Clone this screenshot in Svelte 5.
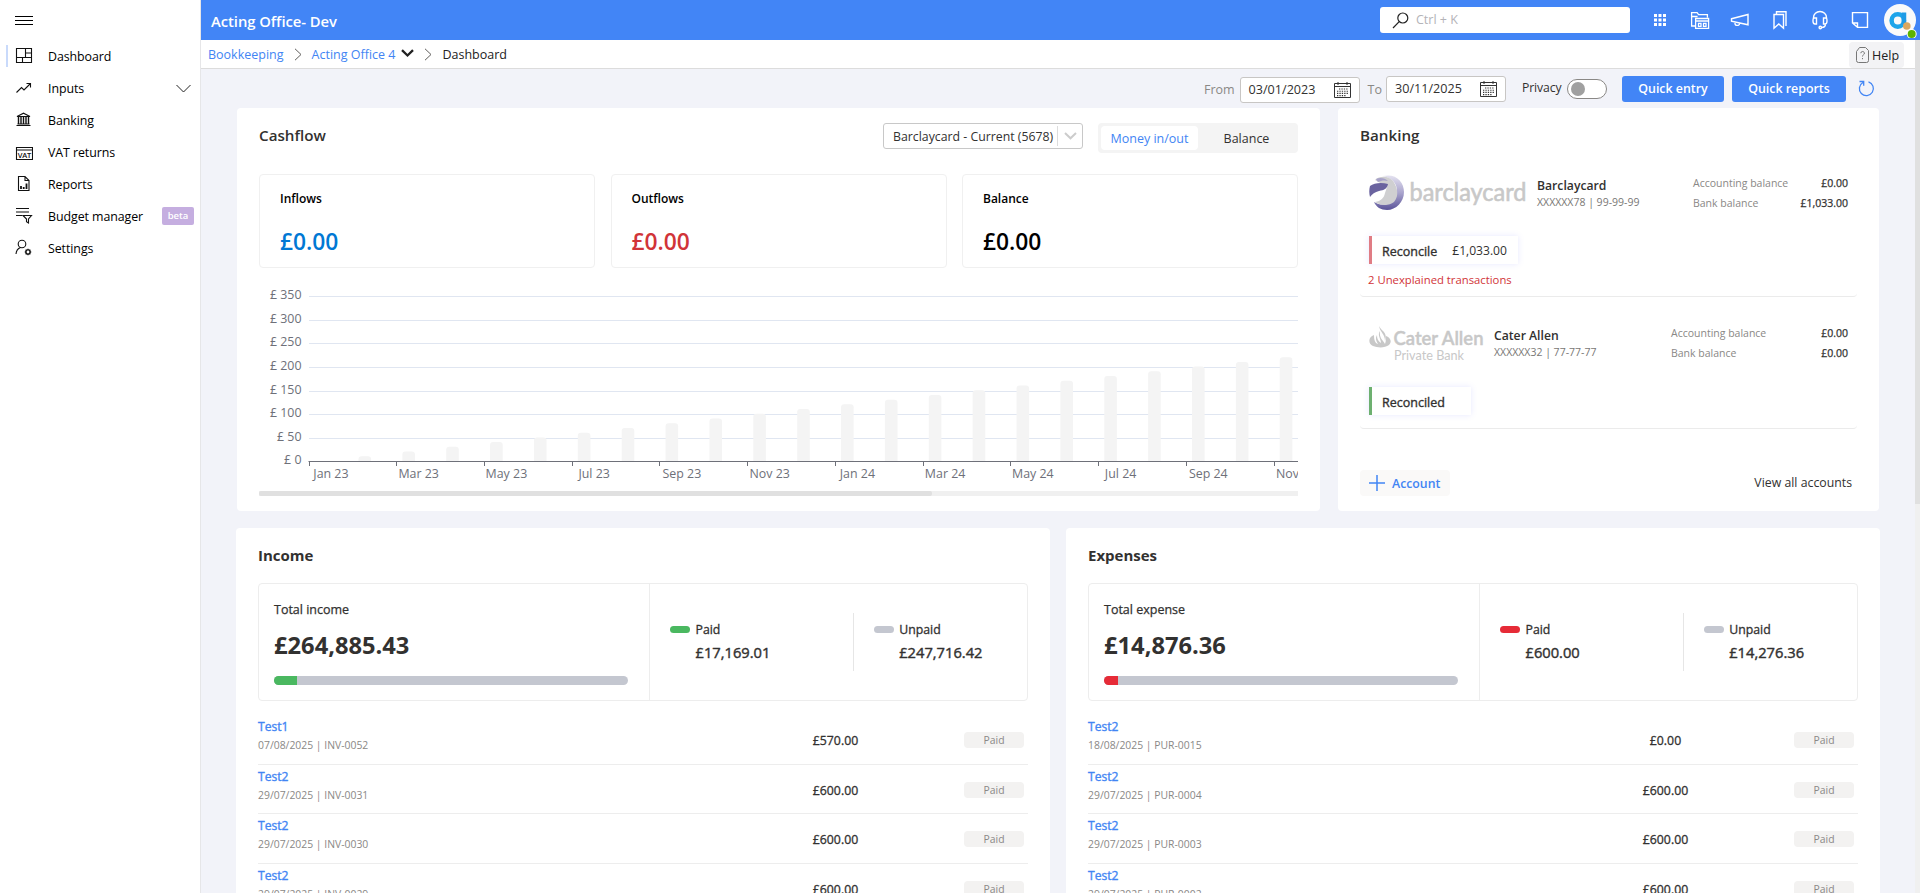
<script>
  const nav = [
    { label: 'Dashboard', icon: 'dashboard', active: true },
    { label: 'Inputs', icon: 'trend', expand: true },
    { label: 'Banking', icon: 'bank' },
    { label: 'VAT returns', icon: 'vat' },
    { label: 'Reports', icon: 'report' },
    { label: 'Budget manager', icon: 'budget', badge: 'beta' },
    { label: 'Settings', icon: 'settings' }
  ];

  const flows = [
    { label: 'Inflows', color: '#0078d4' },
    { label: 'Outflows', color: '#d13438' },
    { label: 'Balance', color: '#000' }
  ];

  const step = 43.87;
  const yTicks = [350, 300, 250, 200, 150, 100, 50, 0];
  const yOf = (v) => Math.round(181.3 - (v * 165.2) / 350) + 0.5;
  const xLabels = ['Jan 23', 'Mar 23', 'May 23', 'Jul 23', 'Sep 23', 'Nov 23', 'Jan 24', 'Mar 24', 'May 24', 'Jul 24', 'Sep 24', 'Nov 24'];
  const bars = Array.from({ length: 22 }, (_, i) => i + 1);

  const panels = [
    {
      title: 'Income', label: 'Total income', total: '£264,885.43', color: '#4ab860', pct: 6.5,
      paid: '£17,169.01', unpaid: '£247,716.42',
      rows: [
        ['Test1', '07/08/2025 | INV-0052', '£570.00'],
        ['Test2', '29/07/2025 | INV-0031', '£600.00'],
        ['Test2', '29/07/2025 | INV-0030', '£600.00'],
        ['Test2', '29/07/2025 | INV-0029', '£600.00']
      ]
    },
    {
      title: 'Expenses', label: 'Total expense', total: '£14,876.36', color: '#e62b37', pct: 4,
      paid: '£600.00', unpaid: '£14,276.36',
      rows: [
        ['Test2', '18/08/2025 | PUR-0015', '£0.00'],
        ['Test2', '29/07/2025 | PUR-0004', '£600.00'],
        ['Test2', '29/07/2025 | PUR-0003', '£600.00'],
        ['Test2', '29/07/2025 | PUR-0002', '£600.00']
      ]
    }
  ];
</script>

{#snippet calendar()}
  <svg class="cal" width="17" height="16" viewBox="0 0 17 16" fill="none" stroke="#333">
    <path d="M.5 1.500h16v14H.5zM.5 4.500h16M4 0v3M13 0v3" />
    <path d="M5 7h9.500M3 9.200h11.500M3 11.400h11.500M3 13.600h9" stroke-dasharray="1.300 1.100" stroke-width="1.100" />
  </svg>
{/snippet}

{#snippet crumbSep()}
  <svg class="sep" width="8" height="13" viewBox="0 0 8 13" fill="none" stroke="#605e5c"><path d="M1 .8l6 5.700-6 5.700" /></svg>
{/snippet}

<div class="app">
  <aside>
    <div class="burger"><i></i><i></i><i></i></div>
    <nav>
      {#each nav as n}
        <div class="item" class:active={n.active}>
          <svg class="ico" width="18" height="18" viewBox="0 0 18 18" fill="none" stroke="#111" stroke-width="1.100">
            {#if n.icon === 'dashboard'}
              <path d="M1.500 1.500h15v14h-15zM10.500 1.500v9M1.500 10.500h15M7.500 10.500v5M10.500 6h6" />
            {:else if n.icon === 'trend'}
              <path d="M1.500 13.500l5-5 2.500 2.500 6.500-6.500M11.500 4.500h4v4" />
            {:else if n.icon === 'bank'}
              <path d="M2 5.500h13L8.500 2.200zM1.500 14.500h14M2.500 13h12" />
              <path d="M3.500 6v7M6 6v7M8.500 6v7M11 6v7M13.500 6v7" stroke-width="1.400" />
            {:else if n.icon === 'vat'}
              <path d="M1.500 4.500h16v12h-16zM1.500 7h16" />
              <text x="9.500" y="14.800" font-size="7.500" font-weight="600" text-anchor="middle" fill="#111" stroke="none" textLength="13.500">VAT</text>
            {:else if n.icon === 'report'}
              <path d="M3.500 1.500h6.500l4 4v10h-10.500zM10 1.500v4h4" />
              <path d="M6 14v-3M8.700 14v-2M11.500 14V8.500" stroke-width="1.800" />
            {:else if n.icon === 'budget'}
              <path d="M1 1.500h13M1 5h13M1 8.500h6M8 8.500h8.500L13.500 12v4l-2-1.200V12z" />
            {:else}
              <circle cx="7" cy="5" r="3.800" />
              <path d="M1 15c.3-3.500 2-5.600 4.500-6.500" />
              <circle cx="13" cy="13" r="2.100" stroke-width="1.400" />
              <path d="M13 9.700v1.300M13 15v1.300M9.700 13h1.300M15 13h1.300M10.700 10.700l.9.900M14.400 14.400l.9.900M15.300 10.700l-.9.900M11.600 14.400l-.9.900" />
            {/if}
          </svg>
          <span class="nl">{n.label}</span>
          {#if n.expand}
            <svg class="exp" width="15" height="9" viewBox="0 0 15 9" fill="none" stroke="#222"><path d="M.5 1l7 7 7-7" /></svg>
          {/if}
          {#if n.badge}<span class="beta">{n.badge}</span>{/if}
        </div>
      {/each}
    </nav>
  </aside>

  <div class="main">
    <header>
      <h1>Acting Office- Dev</h1>
      <div class="search">
        <svg width="17" height="17" viewBox="0 0 17 17" fill="none" stroke="#222" stroke-width="1.200"><circle cx="10.800" cy="6" r="5" /><path d="M7.200 9.600L1 16" /></svg>
        <span>Ctrl + K</span>
      </div>
      <div class="tools">
        <svg width="20" height="20" viewBox="0 0 20 20" fill="#fff">
          {#each [4, 8.5, 13] as y}{#each [4, 8.5, 13] as x}<rect {x} {y} width="3" height="3" />{/each}{/each}
        </svg>
        <svg width="20" height="20" viewBox="0 0 20 20" fill="none" stroke="#fff" stroke-width="1.300">
          <path d="M6 16H1.600V2.600h5.500l1.500 2h8.800v3M1.600 6.500h6M5.600 8.500h13v9.900h-13zM5.600 11h13M8.500 13.300h2.500v3H8.500zM13.500 13.300h2.500v3h-2.500z" />
        </svg>
        <svg width="20" height="20" viewBox="0 0 20 20" fill="none" stroke="#fff" stroke-width="1.400">
          <path d="M1.500 8.800L18 4.500v10.300L1.500 11.200zM5 12v1.500c0 2.500 4.500 2.500 4.500.2" />
        </svg>
        <svg width="20" height="20" viewBox="0 0 20 20" fill="none" stroke="#fff" stroke-width="1.400">
          <path d="M4 4.500h9.500v13.700L8.800 14 4 18.200zM6.500 4V1.700H16V16" />
        </svg>
        <svg width="20" height="20" viewBox="0 0 20 20" fill="none" stroke="#fff" stroke-width="1.400">
          <path d="M3.500 9V7.500a6.500 6 0 0 1 13 0V9M3.500 8h3v6h-1.500c-1 0-2-1-2-3s.2-2.500.5-3zM16.500 8h-3v6h1.500c1 0 2-1 2-3s-.2-2.500-.5-3zM15.500 14c0 2-1.500 3.500-4 3.500" />
          <circle cx="10.300" cy="17.500" r="1.200" />
        </svg>
        <svg width="20" height="20" viewBox="0 0 20 20" fill="none" stroke="#fff" stroke-width="1.400">
          <path d="M2.500 2.600h15v14.800H7.500L2.500 13zM2.500 13h5v4.400" />
        </svg>
        <svg class="avatar" width="36" height="36" viewBox="0 0 36 36">
          <circle cx="16" cy="18" r="16" fill="#fafafa" />
          <circle cx="13.800" cy="18.500" r="6.200" fill="none" stroke="#1ea5ea" stroke-width="4.500" />
          <path d="M20 10.500v12" stroke="#1e9be6" stroke-width="4.500" />
          <circle cx="22.800" cy="24" r="3.800" fill="#dba75f" />
          <circle cx="27.700" cy="32" r="5" fill="#fff" /><circle cx="27.700" cy="32" r="4" fill="#5db300" />
        </svg>
      </div>
    </header>

    <div class="crumbs">
      <a>Bookkeeping</a>
      {@render crumbSep()}
      <a>Acting Office 4</a>
      <svg class="drop" width="13" height="9" viewBox="0 0 13 9" fill="none" stroke="#222" stroke-width="2.300"><path d="M1 1.200l5.500 5.300L12 1.200" /></svg>
      {@render crumbSep()}
      <span>Dashboard</span>
      <div class="help">
        <svg width="13" height="16" viewBox="0 0 13 16" fill="none" stroke="#777"><path d="M3.500.5h6l3 3v10a2 2 0 0 1-2 2h-8a2 2 0 0 1-2-2v-9z" /><path d="M4.800 6.200a1.800 1.800 0 1 1 2.600 1.700c-.7.400-.9.700-.9 1.600M6.500 11v1.200" /></svg>
        <span>Help</span>
      </div>
    </div>

    <div class="body">
      <div class="content">
        <div class="toolbar">
          <span class="dim">From</span>
          <div class="date">03/01/2023{@render calendar()}</div>
          <span class="dim to">To</span>
          <div class="date up">30/11/2025{@render calendar()}</div>
          <span class="priv">Privacy</span>
          <div class="switch"><i></i></div>
          <button class="qe">Quick entry</button>
          <button class="qr">Quick reports</button>
          <svg class="refresh" width="17" height="17" viewBox="0 0 17 17" fill="none" stroke="#4285f4" stroke-width="1.300"><path d="M10.500 1.900a7 7 0 1 1-5.600.6M1.500 1.500h4.200v4.200" /></svg>
        </div>

        <div class="top">
          <section class="card cash">
            <div class="cardhead">
              <h2>Cashflow</h2>
              <div class="select"><span>Barclaycard - Current (5678)</span><svg width="13" height="8" viewBox="0 0 13 8" fill="none" stroke="#ccc" stroke-width="2"><path d="M1 1l5.500 5.300L12 1" /></svg></div>
              <div class="seg"><span class="on">Money in/out</span><span>Balance</span></div>
            </div>
            <div class="flows">
              {#each flows as f}
                <div class="flow"><h4>{f.label}</h4><b style:color={f.color}>£0.00</b></div>
              {/each}
            </div>
            <svg class="chart" width="1039" height="211" viewBox="0 0 1039 211">
              {#each yTicks as v}
                {#if v}<path d="M50 {yOf(v)}H1039" stroke="#e0e6f1" />{/if}
                <text x="42.500" y={yOf(v) + 2.5} text-anchor="end">£ {v}</text>
              {/each}
              {#each bars as i}
                <path d="M{55.6 + step * i} 181v-{4.72 * i - 3}q0-3 3-3h6.600q3 0 3 3V181z" fill="#f4f4f4" />
              {/each}
              <path d="M49.500 181.500H1039" stroke="#6e7079" />
              {#each xLabels as l, i}
                <path d="M{Math.floor(50 + step * 2 * i) + 0.5} 181v5" stroke="#6e7079" />
                <text x={50 + step * (2 * i + 0.5)} y="198" text-anchor="middle">{l}</text>
              {/each}
            </svg>
            <div class="hscroll"><i></i></div>
          </section>

          <section class="card banking">
            <h2>Banking</h2>
            <div class="bank first">
              <div class="brow">
                <svg width="158" height="38" viewBox="0 0 158 38">
                  <defs><linearGradient id="ring" x1="0" y1="0" x2="0" y2="1"><stop offset="0" stop-color="#e4e2f0" /><stop offset=".5" stop-color="#aaa5cd" /><stop offset="1" stop-color="#5a5398" /></linearGradient></defs>
                  <path d="M14 1C27-2 35 7 35 17S27 35 18 35c-6 0-11-3-13-8 8 5 22 3 23-9C28.500 9 24 3 14 1z" fill="url(#ring)" />
                  <path d="M6 5c5-5 14-4 18 1 5 7 6 15 1 21-5 4-13 4-19 0 6-1 9-4 10-9l2-6z" fill="#cfcfd1" />
                  <path d="M1 11c4-3 11-4 18-2-1 5-4 6-9 7-4 1-7 3-9 6-1-4-1-7 0-11z" fill="#6a639f" />
                  <path d="M7 4c4-2 9-1 12 2-3-1-7-.6-10 1z" fill="#a7a2c8" />
                  <text class="bc" x="40.500" y="26" textLength="117" lengthAdjust="spacingAndGlyphs">barclaycard</text>
                </svg>
                <div class="bn"><b>Barclaycard</b><small>XXXXXX78 | 99-99-99</small></div>
                <div class="bals"><div><span>Accounting balance</span><b>£0.00</b></div><div><span>Bank balance</span><b>£1,033.00</b></div></div>
              </div>
              <div class="rec red"><b>Reconcile</b><span>£1,033.00</span></div>
              <div class="unx">2 Unexplained transactions</div>
            </div>
            <div class="bank second">
              <div class="brow">
                <svg width="115" height="38" viewBox="0 0 115 38">
                  <path d="M5 10C-1 12-1 19 4 21c5 2 12 2 16-1 3-3 2-7-3-9 0 4 0 5-1 8-2-4-6-6-5-13-3 4 1 8 1 12-3-2-4-4-4-8-2 3-1 6 1 9-3-1-4-4-4-9z" fill="#c8c8c8" />
                  <path d="M10 1c1 6 6 8 6 15 2-5 0-8-2-10-2-2-3-3-4-5z" fill="#c8c8c8" />
                  <text class="ca" x="24.500" y="20" textLength="90" lengthAdjust="spacingAndGlyphs">Cater Allen</text>
                  <text class="pb" x="25" y="35" textLength="70" lengthAdjust="spacingAndGlyphs">Private Bank</text>
                </svg>
                <div class="bn"><b>Cater Allen</b><small>XXXXXX32 | 77-77-77</small></div>
                <div class="bals wide"><div><span>Accounting balance</span><b>£0.00</b></div><div><span>Bank balance</span><b>£0.00</b></div></div>
              </div>
              <div class="rec green"><b>Reconciled</b></div>
            </div>
            <div class="bfoot">
              <div class="add"><svg width="16" height="16" viewBox="0 0 16 16" stroke="#4285f4" stroke-width="1.500"><path d="M8 0v16M0 8h16" /></svg><span>Account</span></div>
              <span>View all accounts</span>
            </div>
          </section>
        </div>

        <div class="bottom">
          {#each panels as p}
            <section class="card panel">
              <h2>{p.title}</h2>
              <div class="sum">
                <div class="total">
                  <h4>{p.label}</h4>
                  <b>{p.total}</b>
                  <div class="bar"><i style:width="{p.pct}%" style:background={p.color}></i></div>
                </div>
                <div class="part"><i style:background={p.color}></i><div><span>Paid</span><b>{p.paid}</b></div></div>
                <div class="part un"><i></i><div><span>Unpaid</span><b>{p.unpaid}</b></div></div>
              </div>
              {#each p.rows as r}
                <div class="row">
                  <div class="who"><b>{r[0]}</b><small>{r[1]}</small></div>
                  <div class="amt">{r[2]}</div>
                  <div class="st">Paid</div>
                </div>
              {/each}
            </section>
          {/each}
        </div>
      </div>
    </div>
  </div>
  <div class="vscroll"><i></i></div>
</div>

<style>
  :global(body) { background: #f2f3f9; overflow: hidden; }
  * { box-sizing: border-box; }
  .app { position: relative; display: flex; width: 1920px; height: 893px; overflow: hidden; font: 12.3px/18px "Open Sans", "Noto Sans", sans-serif; color: #323130; background: #f2f3f9; }
  h1, h2, h4 { margin: 0; }
  b { font-weight: 600; }
  svg { display: block; flex: none; }

  aside { width: 201px; flex: none; background: #fff; border-right: 1px solid #e6e6e8; }
  .burger { height: 40px; padding: 16px 0 0 15px; display: flex; flex-direction: column; gap: 3px; }
  .burger i { width: 18px; height: 1px; background: #000; }
  .item { position: relative; height: 32px; display: flex; align-items: center; padding-left: 15px; color: #000; font-size: 12.400px; }
  .item.active::before { content: ""; position: absolute; left: 6px; top: 5px; width: 2px; height: 22px; background: #c9dafb; }
  .nl { margin-left: 15px; padding-top: 1px; letter-spacing: -.07px; }
  .exp { margin-left: auto; margin-right: 9px; }
  .beta { margin-left: auto; margin-right: 6px; width: 32px; height: 18px; border-radius: 2px; background: #c5aee0; color: #fff; font-size: 9.500px; font-weight: 600; text-align: center; line-height: 18px; }

  .main { flex: 1; display: flex; flex-direction: column; min-width: 0; }
  header { height: 40px; flex: none; background: #4285f6; display: flex; align-items: center; padding-left: 10px; }
  h1 { font-size: 14.800px; font-weight: 600; color: #fff; letter-spacing: -.05px; padding-top: 1px; }
  .search { margin-left: auto; width: 250px; height: 26px; background: #fff; border-radius: 3px; display: flex; align-items: center; padding-left: 12px; gap: 7px; color: #b4b4b8; font-size: 12.500px; }
  .tools { display: flex; align-items: center; gap: 20px; margin-left: 20px; width: 270px; }
  .avatar { margin-left: -6px; }
  .crumbs { height: 29px; flex: none; background: #fff; border-bottom: 1px solid #dcdcdc; display: flex; align-items: center; padding-left: 7px; font-size: 12.500px; }
  .crumbs a { color: #4285f4; padding-top: 1px; }
  .crumbs span { color: #222; padding-top: 1px; }
  .sep { margin: 0 10px; }
  .drop { margin: 0 0 2px 6px; }
  .help { margin-left: auto; margin-right: 16px; width: 55px; height: 26px; border-radius: 4px; background: #f3f3f5; display: flex; align-items: center; gap: 3px; padding-left: 7px; align-self: flex-end; }

  .content { width: 1644px; margin-left: 35px; }
  .toolbar { height: 39px; display: flex; align-items: center; justify-content: flex-end; font-size: 12.500px; padding-right: 5px; }
  .dim { color: #8a8886; padding-top: 3px; margin-right: 5px; font-size: 12.500px; }
  .to { margin: 0 4px 0 8px; }
  .date { width: 120px; height: 26px; margin-top: 2px; background: #fff; border: 1px solid #c8c6c4; border-radius: 3px; display: flex; align-items: center; justify-content: space-between; padding: 0 8px; font-size: 12.600px; }
  .date.up { margin-top: 0; }
  .priv { margin-left: 16px; font-size: 12.200px; width: 45px; letter-spacing: -.1px; margin-top: -1px; }
  .switch { width: 40px; height: 20px; border: 1px solid #8a8886; border-radius: 10px; background: #fff; display: flex; align-items: center; padding-left: 3px; }
  .switch i { width: 14px; height: 14px; border-radius: 50%; background: #a0a0a0; }
  button { height: 26px; border: 0; border-radius: 3px; background: #4285f6; color: #fff; font: 600 12.400px "Open Sans", sans-serif; padding: 0; }
  .qe { width: 102px; margin-left: 15px; }
  .qr { width: 114px; margin: 0 12px 0 8px; }

  .card { background: #fff; border-radius: 4px; }
  h2 { font-size: 15.200px; font-weight: 600; line-height: 22px; color: #323130; }
  .top { display: flex; gap: 18px; padding-left: 1px; height: 403px; }
  .cash { width: 1083px; padding: 15px 22px 0; }
  .cardhead { display: flex; align-items: flex-start; height: 51px; }
  .cardhead h2 { flex: 1; padding-top: 1px; }
  .select { width: 200px; height: 26px; border: 1px solid #c8c8c8; border-radius: 3px; display: flex; align-items: center; justify-content: space-between; padding: 0 5px 0 9px; white-space: nowrap; }
  .select span { padding-top: 1px; }
  .select svg { box-sizing: content-box; padding: 6px 0 6px 6px; border-left: 1px solid #ddd; }
  .seg { width: 200px; height: 30px; margin-left: 15px; padding: 3px; border-radius: 4px; background: #f4f4f4; display: flex; }
  .seg span { flex: 1; text-align: center; line-height: 25px; border-radius: 4px; font-size: 12.500px; }
  .seg .on { background: #fff; color: #4285f4; }
  .flows { display: grid; grid-template-columns: repeat(3, 1fr); grid-template-rows: 94px; gap: 15.500px; height: 94px; }
  .flow { border: 1px solid #f0f0f0; border-radius: 4px; padding: 14px 20px 0; }
  .flow h4 { font-size: 12px; font-weight: 600; color: #000; line-height: 20px; }
  .flow b { display: block; font-size: 22.800px; line-height: 30px; margin-top: 18px; }
  .chart { margin-top: 12px; overflow: hidden; }
  .chart text { font-size: 12.400px; fill: #6e7079; }
  .hscroll { height: 5px; background: #f0f0f0; }
  .hscroll i { display: block; width: 673px; height: 5px; background: #e0e0e0; border-radius: 2px; }

  .banking { width: 541px; padding: 16px 22px 0; display: flex; flex-direction: column; }
  .bank { height: 132px; flex: none; border-bottom: 1px solid #ebebeb; border-radius: 4px; padding: 29px 9px 0; }
  .bank.first { height: 151px; }
  .second .brow { margin-top: -1px; height: 62px; }
  .brow { display: flex; height: 61px; }
  .brow svg { overflow: visible; }
  .bn { margin-left: 10px; display: flex; flex-direction: column; padding-top: 1px; }
  .bn b { line-height: 19px; font-size: 12.200px; }
  .bn small { font-size: 10.500px; line-height: 14px; color: #797775; }
  .bals { margin-left: auto; width: 155px; }
  .bals.wide { width: 177px; }
  .bals div { display: flex; justify-content: space-between; line-height: 20px; font-size: 10.500px; color: #8a8886; margin-top: -2px; margin-bottom: 2px; }
  .bals b { color: #323130; font-weight: 400; -webkit-text-stroke: .25px currentColor; }
  .rec { width: max-content; height: 28px; display: flex; align-items: center; border-left: 3px solid #e07c84; box-shadow: 0 0 6px rgba(120, 130, 255, .18); padding: 3px 10px 0 10px; gap: 15px; }
  .rec.red { width: 149px; }
  .rec.green { width: 102px; border-color: #6db070; }
  .rec b { font-weight: 400; font-size: 12.500px; -webkit-text-stroke: .35px currentColor; }
  .rec span { margin-top: -1px; font-size: 12.100px; }
  .unx { color: #d13438; font-size: 11.300px; margin: 7px 0 0 -1px; }
  .bc { font: 400 25px Lato, sans-serif; fill: #c8c8c8; stroke: #c8c8c8; stroke-width: .6px; }
  .ca { font: 600 19px Lato, sans-serif; fill: #c8c8c8; stroke: #c8c8c8; stroke-width: .4px; }
  .pb { font: 400 12.500px Lato, sans-serif; fill: #c8c8c8; }
  .bfoot { display: flex; align-items: center; justify-content: space-between; margin-top: 41px; padding-right: 5px; font-size: 12.300px; }
  .add { width: 90px; height: 26px; border-radius: 4px; background: #faf9f8; color: #4285f4; font-weight: 600; display: flex; align-items: center; gap: 7px; padding-left: 9px; }
  .add span { padding-top: 1px; }

  .bottom { display: flex; gap: 16px; margin-top: 17px; }
  .panel { width: 814px; height: 560px; padding: 16px 22px 0; }
  .panel h2 { font-weight: 700; font-size: 15px; }
  .sum { display: flex; height: 118px; margin: 17px 0 14px; border: 1px solid #ededed; border-radius: 4px; }
  .total { width: 392px; border-right: 1px solid #ededed; padding: 16px 21px 0 15px; }
  .total h4 { font-size: 12.500px; font-weight: 400; line-height: 20px; -webkit-text-stroke: .25px currentColor; }
  .total b { display: block; font-size: 23.700px; font-weight: 700; line-height: 32px; margin-top: 9px; }
  .bar { height: 9px; margin-top: 15px; border-radius: 5px; background: #c4c7d0; overflow: hidden; }
  .bar i { display: block; height: 9px; }
  .part { width: 203px; margin: 29px 0; height: 58px; padding: 13px 0 0 20px; display: flex; gap: 5px; }
  .part > i { width: 20px; height: 7px; border-radius: 4px; background: #c4c7d0; }
  .part > div { display: flex; flex-direction: column; margin-top: -5px; }
  .part span { -webkit-text-stroke: .3px currentColor; }
  .part b { font-size: 14.700px; font-weight: 400; line-height: 24px; margin-top: 1px; -webkit-text-stroke: .4px currentColor; }
  .un { border-left: 1px solid #e6e6e6; width: 174px; }
  .row { display: flex; height: 49.500px; border-bottom: 1px solid #ededed; padding-right: 4px; }
  .who { width: 500px; display: flex; flex-direction: column; padding-top: 3px; }
  .who b { color: #4285f4; font-weight: 400; font-size: 12.100px; -webkit-text-stroke: .35px currentColor; }
  .who small { color: #8a8886; font-size: 10.400px; line-height: 19px; }
  .amt { width: 155px; text-align: center; padding-top: 17px; -webkit-text-stroke: .3px currentColor; }
  .st { margin-left: auto; margin-top: 17px; width: 60px; height: 16px; border-radius: 4px; background: #f3f2f1; color: #8a8886; font-size: 10.400px; line-height: 16px; text-align: center; }

  .vscroll { position: absolute; right: 0; top: 40px; width: 5px; height: 853px; background: #f0f0f0; }
  .vscroll i { display: block; height: 464px; background: #e0e0e0; }
</style>
